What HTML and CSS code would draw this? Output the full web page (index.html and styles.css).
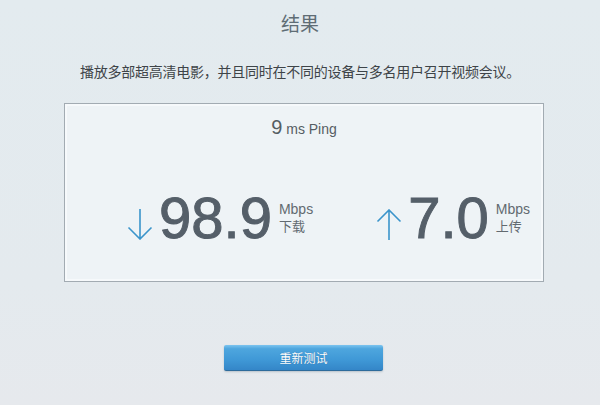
FILE: index.html
```html
<!DOCTYPE html>
<html lang="zh-CN">
<head>
<meta charset="utf-8">
<title>结果</title>
<link rel="stylesheet" href="styles.css">
</head>
<body>
<div class="page">
  <h1 class="title">结果</h1>
  <p class="sub">播放多部超高清电影，并且同时在不同的设备与多名用户召开视频会议。</p>
  <div class="box">
    <div class="ping"><span class="ping-num">9</span> ms Ping</div>
    <div class="speeds">
      <div class="speed">
        <svg class="arrow" width="26" height="31" viewBox="0 0 26 31"><path d="M13 0 V30 M1.5 18.5 L13 30 L24.5 18.5" fill="none" stroke="#3a94cb" stroke-width="1.6"/></svg>
        <span class="num">98.9</span>
        <div class="unit"><div>Mbps</div><div class="cn">下载</div></div>
      </div>
      <div class="speed">
        <svg class="arrow" width="26" height="31" viewBox="0 0 26 31"><path d="M13 31 V1 M1.5 12.5 L13 1 L24.5 12.5" fill="none" stroke="#3a94cb" stroke-width="1.6"/></svg>
        <span class="num">7.0</span>
        <div class="unit"><div>Mbps</div><div class="cn">上传</div></div>
      </div>
    </div>
  </div>
  <button class="btn">重新测试</button>
</div>
</body>
</html>
```
FILE: styles.css
```css
html, body {
  margin: 0;
  height: 100%;
}
body {
  background: linear-gradient(#e3ebef, #e4eaee 70%, #e6e9ed);
  font-family: "Liberation Sans", "Noto Sans CJK SC", sans-serif;
  color: #444;
}
.page {
  padding-top: 12px;
}
.title {
  margin: 0;
  text-align: center;
  font-family: "Noto Sans CJK SC", sans-serif;
  font-weight: normal;
  font-size: 19px;
  line-height: 22px;
  color: #5f6d75;
}
.sub {
  margin: 27px 0 0;
  text-align: center;
  font-family: "Noto Sans CJK SC", sans-serif;
  font-size: 14px;
  line-height: 20px;
  letter-spacing: -0.25px;
  color: #3e4448;
}
.box {
  box-sizing: border-box;
  margin: 22px 0 0 64px;
  width: 480px;
  height: 179px;
  border: 1px solid #a2abb2;
  background: #eef3f6;
  box-shadow: inset 0 0 0 2px #f6f9fb;
}
.ping {
  padding-top: 13px;
  text-align: center;
  font-size: 14px;
  line-height: 20px;
  color: #555d63;
}
.ping-num {
  font-size: 20px;
}
.speeds {
  display: flex;
  gap: 63px;
  padding-left: 62px;
  margin-top: 50px;
}
.speed {
  display: flex;
  align-items: flex-start;
}
.arrow {
  margin-top: 20px;
  margin-right: 6px;
}
.num {
  font-size: 58px;
  line-height: 58px;
  color: #555f69;
  -webkit-text-stroke: 1px #555f69;
}
.unit {
  margin: 12px 0 0 7px;
  font-size: 14px;
  line-height: 16px;
  color: #626a70;
}
.unit .cn {
  font-family: "Noto Sans CJK SC", sans-serif;
  font-size: 13px;
  line-height: 17px;
}
.btn {
  display: block;
  margin: 63px 0 0 224px;
  width: 159px;
  height: 26px;
  padding: 0;
  border: 0;
  border-bottom: 1px solid #2d6b9b;
  border-radius: 2px;
  background: linear-gradient(#7cc4ef, #4ea6de 15%, #3f98d6 60%, #3486c8);
  box-shadow: 0 1px 2px rgba(60, 80, 100, 0.25);
  color: #fff;
  font-family: "Noto Sans CJK SC", sans-serif;
  font-size: 12px;
  line-height: 25px;
  text-shadow: 0 0 1px rgba(0, 40, 80, 0.4);
}
```
